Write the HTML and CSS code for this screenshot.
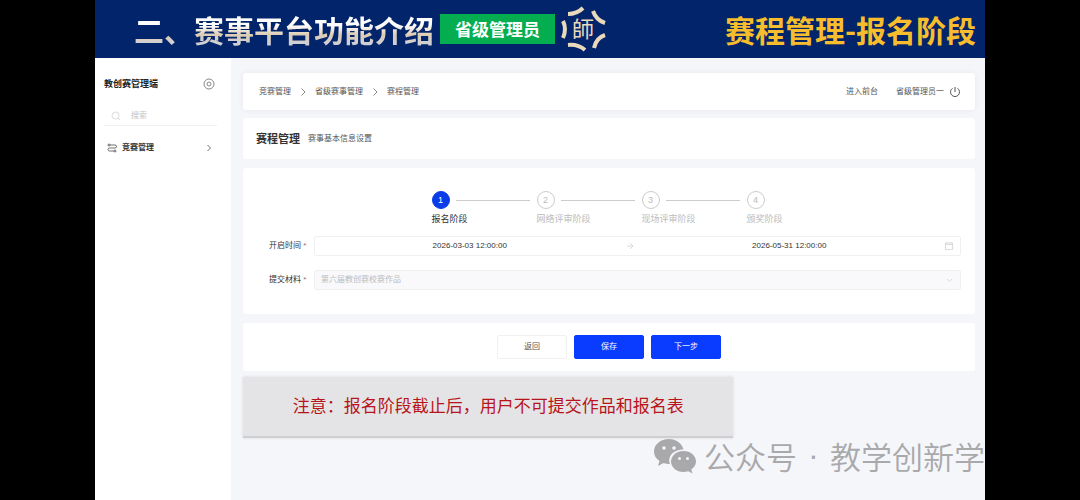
FILE: index.html
```html
<!DOCTYPE html>
<html lang="zh-CN">
<head>
  <meta charset="UTF-8" />
  <meta name="viewport" content="width=device-width, initial-scale=1.0"/>
  <title>赛程管理</title>
  <link rel="stylesheet" href="styles.css">
</head>
<body>
  <div class="slide">
    <header class="banner">
      <h1 class="banner-title">二、赛事平台功能介绍</h1>
      <span class="role">省级管理员</span>
      <svg class="seal" viewBox="0 0 46 46" aria-hidden="true">
        <g fill="none" stroke="#ead9bd" stroke-width="4">
          <path d="M7 8Q16 8 22 2"/>
          <path d="M32 5Q35 14 44 17"/>
          <path d="M44 29Q35 32 33 42"/>
          <path d="M7 39Q17 38 24 44"/>
          <path d="M2 15Q6 23 2 32"/>
        </g>
        <text x="22" y="31" text-anchor="middle">師</text>
      </svg>
      <h2 class="banner-stage">赛程管理-报名阶段</h2>
    </header>

    <div class="app">
      <aside class="sidebar">
        <div class="brand">
          <strong>教创赛管理端</strong>
          <svg class="icon-target" viewBox="0 0 12 12" aria-hidden="true">
            <circle cx="6" cy="6" r="5"/><circle cx="6" cy="6" r="2"/>
          </svg>
        </div>
        <label class="search">
          <svg class="icon" viewBox="0 0 10 10" aria-hidden="true">
            <circle cx="4.5" cy="4.5" r="3.5"/><path d="M7 7l2 2"/>
          </svg>
          <input type="text" placeholder="搜索" aria-label="搜索">
        </label>
        <nav>
          <a class="menu-item" href="#">
            <svg class="icon" viewBox="0 0 10 10" aria-hidden="true">
              <path d="M3 2h5a1.3 1.3 0 0 1 0 3H2.500a1.500 1.500 0 0 0 0 3H7"/>
              <circle cx="2" cy="2" r="1"/><circle cx="8" cy="8" r="1"/>
            </svg>
            <span>竞赛管理</span>
            <svg class="icon chevron" viewBox="0 0 10 10" aria-hidden="true"><path d="M3.500 2l3 3-3 3"/></svg>
          </a>
        </nav>
      </aside>

      <main class="main">
        <div class="card topbar">
          <nav class="crumbs">
            <a href="#">竞赛管理</a>
            <svg class="icon" viewBox="0 0 10 10" aria-hidden="true"><path d="M3.500 1.500L7 5 3.500 8.500"/></svg>
            <a href="#">省级赛事管理</a>
            <svg class="icon" viewBox="0 0 10 10" aria-hidden="true"><path d="M3.500 1.500L7 5 3.500 8.500"/></svg>
            <a href="#">赛程管理</a>
          </nav>
          <div class="user">
            <a href="#">进入前台</a>
            <span>省级管理员一</span>
            <button class="power" type="button" aria-label="退出">
              <svg viewBox="0 0 12 12" aria-hidden="true"><path d="M3.500 2.300a4.500 4.500 0 1 0 5 0M6 1v5"/></svg>
            </button>
          </div>
        </div>

        <div class="card heading">
          <h3>赛程管理</h3>
          <p>赛事基本信息设置</p>
        </div>

        <form class="card panel" id="scheduleForm">
          <ol class="steps">
            <li class="step active"><span class="num">1</span><span class="name">报名阶段</span></li>
            <li class="step"><span class="num">2</span><span class="name">网络评审阶段</span></li>
            <li class="step"><span class="num">3</span><span class="name">现场评审阶段</span></li>
            <li class="step"><span class="num">4</span><span class="name">颁奖阶段</span></li>
          </ol>
          <div class="row">
            <label for="startTime">开启时间 <i>*</i></label>
            <div class="field">
              <input id="startTime" type="text" value="2026-03-03 12:00:00">
              <svg class="icon" viewBox="0 0 10 10" aria-hidden="true"><path d="M2 5h6M5 2l3 3-3 3"/></svg>
              <input type="text" value="2026-05-31 12:00:00" aria-label="结束时间">
              <svg class="icon" viewBox="0 0 10 10" aria-hidden="true"><path d="M1.500 2h7v6.500h-7zM1.500 3.500h7M3 1v1M7 1v1"/></svg>
            </div>
          </div>
          <div class="row">
            <label for="material">提交材料 <i>*</i></label>
            <div class="field disabled">
              <select id="material" disabled>
                <option>第六届教创赛校赛作品</option>
              </select>
              <svg class="icon" viewBox="0 0 10 10" aria-hidden="true"><path d="M3 4l2.500 2.500L8 4"/></svg>
            </div>
          </div>
        </form>

        <div class="card actions">
          <button type="button">返回</button>
          <button class="primary" type="submit" form="scheduleForm">保存</button>
          <button class="primary" type="button">下一步</button>
        </div>

        <p class="notice">注意：报名阶段截止后，用户不可提交作品和报名表</p>
      </main>
    </div>

    <div class="watermark">
      <svg viewBox="0 0 42 35" aria-hidden="true">
        <path d="M15 0C6.500 0 0 5.500 0 12.500c0 4 2 7.200 5.500 9.500L4 27l5.500-3c2 .6 4 1 6.500.9C13 16 21 10.500 29.500 10.500 28 4.500 22 0 15 0z"/>
        <path d="M29.500 12C22.500 12 17 16.700 17 22.500S22.500 33 29.500 33c1.700 0 3.300-.3 4.800-.8l4.200 2.300-1.200-4C40.200 28.500 42 25.700 42 22.500 42 16.700 36.500 12 29.500 12z"/>
        <g fill="#f5f6fa">
          <circle cx="10" cy="9" r="1.800"/><circle cx="20" cy="9" r="1.800"/>
          <circle cx="25.500" cy="19.500" r="1.500"/><circle cx="33.500" cy="19.500" r="1.500"/>
        </g>
      </svg>
      <span>公众号</span>
      <span class="dot">·</span>
      <span>教学创新学</span>
    </div>
  </div>
</body>
</html>
```
FILE: styles.css
```css
* {
  box-sizing: border-box;
}
body {
  margin: 0;
  background: #000;
  color: #555;
  font: 8px/14px "Liberation Sans", "Noto Sans CJK SC", sans-serif;
}
h1, h2, h3, p, ol {
  margin: 0;
  padding: 0;
}
a {
  color: inherit;
  text-decoration: none;
}
button, input, select {
  font: inherit;
  color: inherit;
}
svg {
  flex: none;
  fill: none;
  stroke: currentColor;
}
.icon {
  width: 10px;
  height: 10px;
  stroke-width: 0.7;
}
.slide {
  position: relative;
  display: flex;
  flex-direction: column;
  min-height: 100vh;
  margin: 0 95px;
  background: #f5f6fa;
}

/* top banner */
.banner {
  display: flex;
  align-items: center;
  height: 58px;
  padding: 0 9px 0 39px;
  gap: 6px;
  background: #02246a;
  font-family: "Noto Sans CJK SC", sans-serif;
}
.banner-title, .banner-stage {
  font-size: 30px;
  line-height: 40px;
  font-weight: 700;
  white-space: nowrap;
}
.banner-title {
  background: linear-gradient(#fff 40%, #dccbb2 65%, #d0d0d4 85%);
  -webkit-background-clip: text;
  background-clip: text;
  color: transparent;
}
.banner-stage {
  margin-left: auto;
  color: #f7bd2c;
}
.role {
  padding: 0 15px;
  background: #04ae50;
  color: #fff;
  font-size: 17px;
  line-height: 30px;
  font-weight: 700;
  white-space: nowrap;
}
.seal {
  width: 46px;
  height: 46px;
  overflow: visible;
}
.seal text {
  font-size: 22px;
  fill: #ead9bd;
  stroke: none;
}

.app {
  display: flex;
  flex: 1;
}

/* sidebar */
.sidebar {
  width: 136px;
  padding: 19px 14px 0 9px;
  background: #fff;
}
.brand {
  display: flex;
  align-items: center;
  justify-content: space-between;
  padding-right: 2px;
  color: #222;
  font-size: 9px;
}
.icon-target {
  width: 12px;
  height: 12px;
  color: #888;
}
.search {
  display: flex;
  align-items: center;
  gap: 10px;
  height: 20px;
  margin-top: 15px;
  padding: 0 7px;
  border-bottom: 1px solid #f0f0f0;
  color: #ccc;
}
.search input {
  width: 100%;
  min-width: 0;
  padding: 0;
  border: none;
  outline: none;
  background: none;
}
.search input::placeholder {
  color: #c4c4c4;
}
.menu-item {
  display: flex;
  align-items: center;
  gap: 5px;
  margin-top: 15px;
  padding: 0 3px;
  color: #333;
  font-weight: 700;
}
.chevron {
  margin-left: auto;
}

/* content */
.main {
  flex: 1;
  min-width: 0;
  padding: 15px 10px 0 12px;
}
.card {
  background: #fff;
  border-radius: 3px;
}
.topbar {
  display: flex;
  align-items: center;
  justify-content: space-between;
  height: 37px;
  padding: 0 14px 0 16px;
  box-shadow: 0 0 6px rgba(0,0,0,0.06);
}
.crumbs {
  display: flex;
  align-items: center;
  gap: 7px;
}
.user {
  display: flex;
  align-items: center;
}
.user a {
  margin-right: 18px;
}
.power {
  width: 12px;
  height: 12px;
  margin-left: 5px;
  padding: 0;
  border: none;
  background: none;
  cursor: pointer;
}
.power svg {
  display: block;
}
.heading {
  display: flex;
  align-items: center;
  gap: 8px;
  height: 41px;
  margin-top: 8px;
  padding: 0 13px;
}
.heading h3 {
  color: #333;
  font-size: 11px;
}
.panel {
  margin-top: 9px;
  padding: 23px 14px 24px 26px;
}

/* steps */
.steps {
  display: flex;
  justify-content: center;
  padding-right: 16px;
  list-style: none;
}
.step {
  width: 105px;
  color: #bbb;
  white-space: nowrap;
}
.step:last-child {
  width: 36px;
}
.num {
  display: block;
  width: 18px;
  height: 18px;
  border: 1px solid #ccc;
  border-radius: 50%;
  font-size: 9px;
  line-height: 16px;
  text-align: center;
}
.name {
  display: block;
  margin-top: 3px;
  font-size: 9px;
}
.step:not(:last-child) {
  display: grid;
  grid-template-columns: 18px 1fr;
  column-gap: 6px;
}
.step:not(:last-child)::after {
  content: "";
  grid-area: 1 / 2;
  align-self: center;
  height: 1px;
  margin-right: 7px;
  background: #ccc;
}
.step .name {
  grid-column: 1 / -1;
}
.step.active {
  color: #333;
}
.active .num {
  border-color: #0a3ce8;
  background: #0a3ce8;
  color: #fff;
}

/* form rows */
.row {
  display: flex;
  align-items: center;
  margin-top: 14px;
}
.steps + .row {
  margin-top: 10px;
}
.row label {
  width: 45px;
  color: #333;
  white-space: nowrap;
}
.row i {
  color: #a66;
  font-style: normal;
}
.field {
  display: flex;
  flex: 1;
  align-items: center;
  height: 20px;
  padding-right: 6px;
  border: 1px solid #f0f0f0;
  border-radius: 2px;
  color: #ccc;
}
.field input {
  flex: 1;
  min-width: 0;
  padding: 0;
  border: none;
  outline: none;
  background: none;
  color: #333;
  text-align: center;
}
.field.disabled {
  background: #f9f9fb;
}
.field select {
  flex: 1;
  padding: 0 6px;
  border: none;
  appearance: none;
  background: none;
  color: #bbb;
  opacity: 1;
}

.actions {
  display: flex;
  justify-content: center;
  gap: 7px;
  margin-top: 9px;
  padding: 12px;
}
.actions button {
  width: 70px;
  height: 24px;
  padding: 0;
  border: 1px solid #f0f0f0;
  border-radius: 2px;
  background: #fff;
  cursor: pointer;
}
.actions .primary {
  border-color: #0a3cff;
  background: #0a3cff;
  color: #fff;
}
.notice {
  width: 67%;
  margin-top: 6px;
  padding: 18px 0 17px;
  border-bottom: 2px solid #cfcfd2;
  background: #e4e4e6;
  box-shadow: 0 0 3px rgba(0,0,0,0.12);
  color: #b8141c;
  font-size: 17px;
  line-height: 24px;
  text-align: center;
  white-space: nowrap;
}

/* account watermark */
.watermark {
  position: absolute;
  right: 0;
  bottom: 21px;
  display: flex;
  align-items: center;
  color: #a9a9ab;
  font: 350 31px/46px "Noto Sans CJK SC", sans-serif;
  white-space: nowrap;
}
.watermark svg {
  width: 42px;
  height: 35px;
  margin-right: 8px;
  fill: currentColor;
  stroke: none;
}
.dot {
  width: 33px;
  font-family: "Liberation Sans", sans-serif;
  text-align: center;
}
```
